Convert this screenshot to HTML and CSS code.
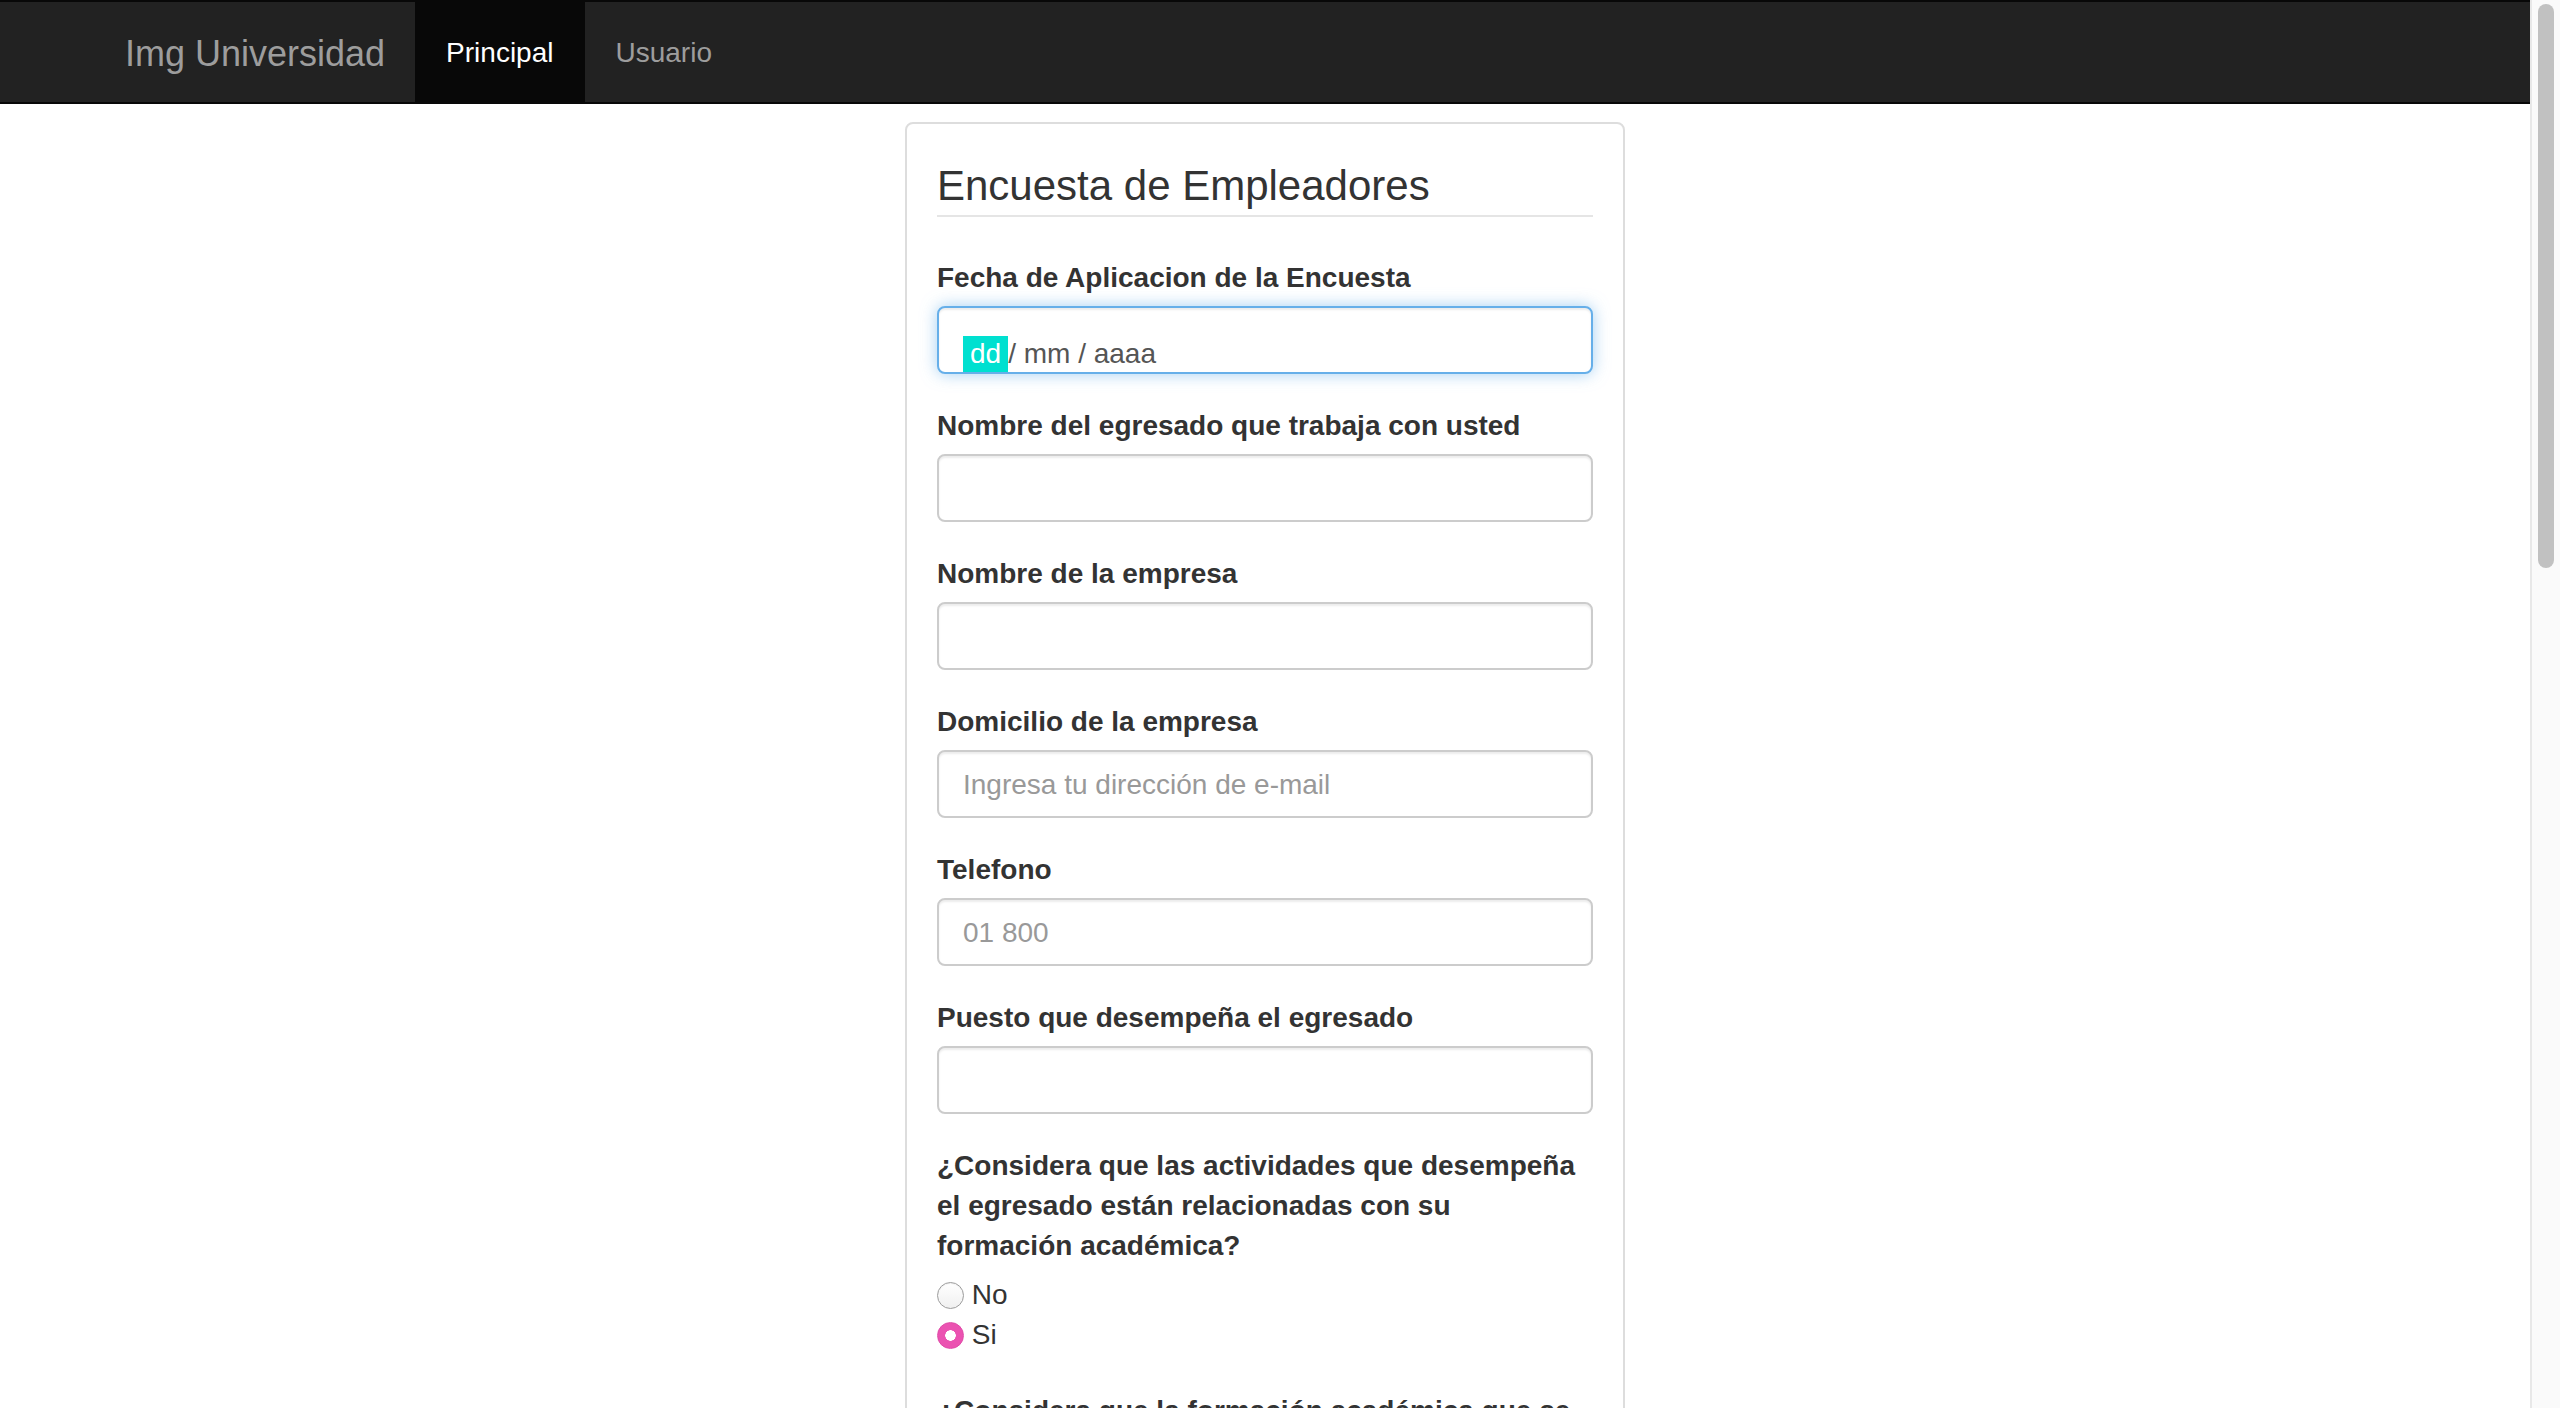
FILE: index.html
```html
<!DOCTYPE html>
<html lang="es">
<head>
<meta charset="utf-8">
<title>Encuesta de Empleadores</title>
<link rel="stylesheet" href="styles.css">
</head>
<body>
<nav class="navbar">
  <div class="container nav-container">
    <a class="brand" href="#">Img Universidad</a>
    <ul class="nav">
      <li class="active"><a href="#">Principal</a></li>
      <li><a href="#">Usuario</a></li>
    </ul>
  </div>
</nav>
<main class="container">
  <form class="card">
    <div class="legend">Encuesta de Empleadores</div>

    <div class="form-group">
      <label class="field-label">Fecha de Aplicacion de la Encuesta</label>
      <div class="form-control focused date-input"><span class="seg-sel">dd</span><span class="seg-rest">/ mm / aaaa</span></div>
    </div>

    <div class="form-group">
      <label class="field-label">Nombre del egresado que trabaja con usted</label>
      <input class="form-control" type="text">
    </div>

    <div class="form-group">
      <label class="field-label">Nombre de la empresa</label>
      <input class="form-control" type="text">
    </div>

    <div class="form-group">
      <label class="field-label">Domicilio de la empresa</label>
      <input class="form-control" type="text" placeholder="Ingresa tu dirección de e-mail">
    </div>

    <div class="form-group">
      <label class="field-label">Telefono</label>
      <input class="form-control" type="text" placeholder="01 800">
    </div>

    <div class="form-group">
      <label class="field-label">Puesto que desempeña el egresado</label>
      <input class="form-control" type="text">
    </div>

    <div class="form-group radio-group">
      <label class="field-label">¿Considera que las actividades que desempeña<br>el egresado están relacionadas con su<br>formación académica?</label>
      <div class="radio-list">
        <label class="radio-line"><input type="radio" name="q1"> No</label>
        <label class="radio-line"><input type="radio" name="q1" checked> Si</label>
      </div>
    </div>

    <div class="form-group radio-group">
      <label class="field-label">¿Considera que la formación académica que se imparte en la institución es adecuada para el puesto?</label>
      <div class="radio-list">
        <label class="radio-line"><input type="radio" name="q2"> No</label>
        <label class="radio-line"><input type="radio" name="q2"> Si</label>
      </div>
    </div>

    <div class="form-group radio-group">
      <label class="field-label">¿Recomendaría contratar a otros egresados de la universidad?</label>
      <div class="radio-list">
        <label class="radio-line"><input type="radio" name="q3"> No</label>
        <label class="radio-line"><input type="radio" name="q3"> Si</label>
      </div>
    </div>

    <div class="form-group">
      <label class="field-label">Comentarios</label>
      <input class="form-control" type="text">
    </div>
  </form>
</main>
<div class="scrollbar" aria-hidden="true"><div class="scrollbar-thumb"></div></div>
</body>
</html>
```
FILE: styles.css
```css
* {
  box-sizing: border-box;
}

html {
  background: #fff;
}

body {
  margin: 0 30px 0 0;
  min-height: 3515px;
  font-family: "Liberation Sans", Arial, "Helvetica Neue", Helvetica, sans-serif;
  font-size: 28px;
  line-height: 40px;
  color: #333;
  background: #fff;
}

/* Window scrollbar (drawn over the right edge) */
.scrollbar {
  position: fixed;
  top: 0;
  right: 0;
  width: 30px;
  height: 100vh;
  background: #fafafa;
  border-left: 2px solid #e8e8e8;
}

.scrollbar-thumb {
  height: 564px;
  margin: 4px 6px 0 6px;
  background: #c1c1c1;
  border-radius: 8px;
}

.container {
  width: 2340px;
  margin: 0 auto;
  padding: 0 30px;
}

/* Navbar */
.navbar {
  background: #222;
  border-top: 2px solid #080808;
  border-bottom: 2px solid #080808;
}

.nav-container {
  display: flex;
  align-items: stretch;
}

.brand {
  display: block;
  margin-left: -30px;
  padding: 32px 30px 28px;
  height: 100px;
  font-size: 36px;
  line-height: 40px;
  color: #9d9d9d;
  text-decoration: none;
}

.nav {
  display: flex;
  list-style: none;
  margin: 0;
  padding: 0;
}

.nav a {
  display: block;
  padding: 31px 31px 29px;
  line-height: 40px;
  color: #9d9d9d;
  text-decoration: none;
}

.nav .active a {
  background: #080808;
  color: #fff;
}

/* Card */
.card {
  width: 720px;
  margin: 18px auto 0;
  padding: 31px 30px 30px;
  border: 2px solid #ddd;
  border-radius: 8px;
}

.legend {
  font-size: 42px;
  line-height: 60px;
  padding-top: 1px;
  height: 62px;
  margin-bottom: 39px;
  border-bottom: 2px solid #e5e5e5;
  color: #333;
}

.form-group {
  margin-bottom: 30px;
}

.field-label {
  display: block;
  font-weight: bold;
  line-height: 40px;
  padding-top: 2px;
  margin-bottom: 8px;
}

.form-control {
  display: block;
  width: 100%;
  height: 68px;
  margin: 0;
  padding: 13px 24px 11px;
  font-family: inherit;
  font-size: 28px;
  line-height: 40px;
  color: #555;
  background: #fff;
  border: 2px solid #ccc;
  border-radius: 8px;
  box-shadow: inset 0 2px 2px rgba(0, 0, 0, 0.075);
  outline: none;
}

.form-control::placeholder {
  color: #999;
}

.focused {
  border-color: #66afe9;
  box-shadow: inset 0 2px 2px rgba(0, 0, 0, 0.075), 0 0 16px rgba(102, 175, 233, 0.6);
}

.date-input {
  display: flex;
  align-items: flex-end;
  padding-top: 0;
  padding-bottom: 0;
  white-space: pre;
}

.seg-sel {
  padding: 0 7px;
  line-height: 36px;
  background: #00e0d0;
  color: #fff;
}

.seg-rest {
  line-height: 36px;
  color: #555;
}

.radio-group {
  margin-bottom: 34px;
}

.radio-list {
  padding-top: 1px;
}

.radio-line {
  display: flex;
  align-items: center;
  height: 40px;
  color: #333;
  white-space: pre;
}

.radio-line input {
  -webkit-appearance: none;
  appearance: none;
  width: 27px;
  height: 27px;
  margin: 0;
  border-radius: 50%;
  border: 1.5px solid #9c9c9c;
  background: linear-gradient(#fff, #f0f0f0);
  box-shadow: inset 0 1px 1px rgba(0, 0, 0, 0.06);
  flex: none;
}

.radio-line input:checked {
  border-color: #e04aa8;
  background: radial-gradient(circle, #fff 0 5px, #eb52b1 5.5px);
  box-shadow: none;
}
```
